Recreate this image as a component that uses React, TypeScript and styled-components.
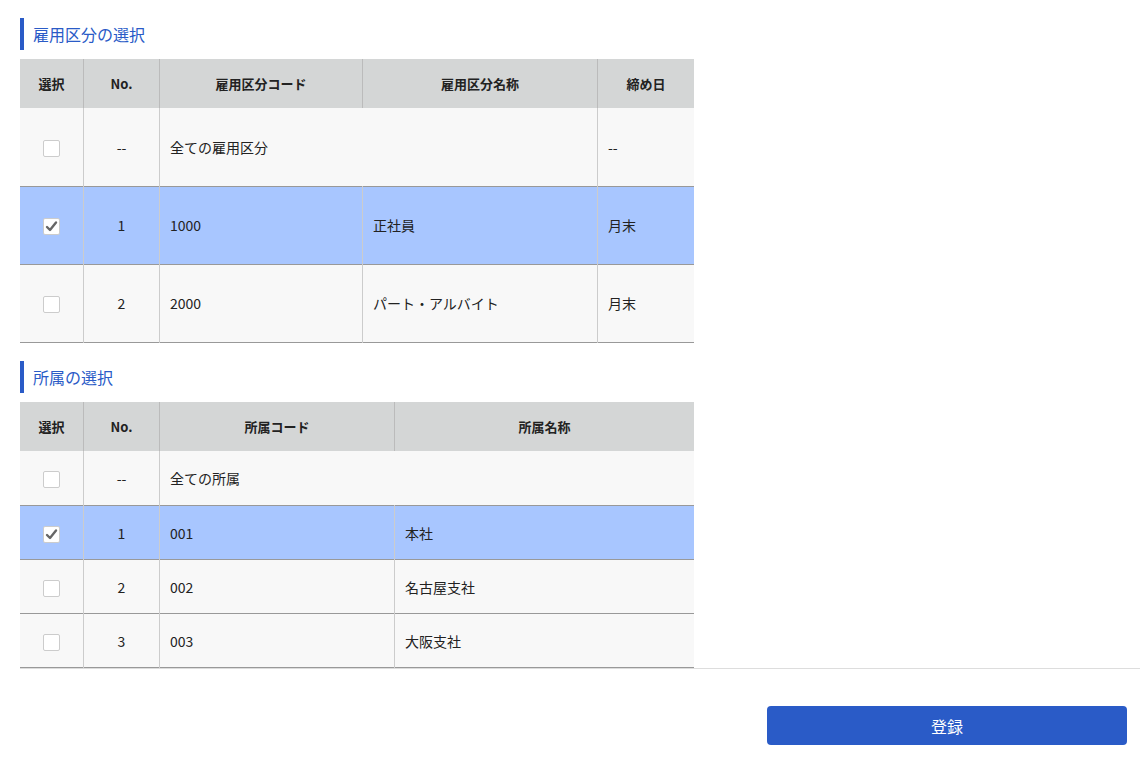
import React from "react";
import styled, { createGlobalStyle } from "styled-components";

const Global = createGlobalStyle`
  body { margin: 0; background: #fff; font-family: "Noto Sans CJK JP", "Noto Sans", sans-serif; color: #222; }
`;

const Page = styled.div`
  padding: 18px 0 0 0;
  width: 1140px;
`;
const Section = styled.div`
  padding-left: 20px;
`;
const Heading = styled.h2<{ $mt?: number }>`
  margin: ${(p) => p.$mt ?? 0}px 0 9px 0;
  border-left: 4px solid #2a5bc7;
  padding-left: 9px;
  height: 32px;
  line-height: 32px;
  font-size: 16px;
  font-weight: 400;
  color: #2a5bc7;
`;
const Table = styled.table`
  border-collapse: collapse;
  width: 674px;
  table-layout: fixed;
  font-size: 14px;
  border-bottom: 1px solid #999;
`;
const Th = styled.th<{ $w?: number }>`
  background: #d4d6d6;
  height: 49px;
  padding: 0;
  font-size: 13px;
  font-weight: 700;
  border-left: 1px solid #bbb;
  ${(p) => (p.$w ? `width: ${p.$w}px;` : "")}
  &:first-child { border-left: none; }
`;
const Tr = styled.tr<{ $sel?: boolean; $h: number }>`
  height: ${(p) => p.$h}px;
  background: ${(p) => (p.$sel ? "#a8c6ff" : "#f8f8f8")};
  & + & { border-top: 1px solid #999; }
`;
const Td = styled.td<{ $center?: boolean }>`
  padding: 0 10px;
  text-align: ${(p) => (p.$center ? "center" : "left")};
  border-left: 1px solid #ccc;
  &:first-child { border-left: none; }
`;
const Box = styled.span`
  display: inline-flex;
  width: 17px;
  height: 17px;
  box-sizing: border-box;
  border: 1px solid #ccc;
  border-radius: 2px;
  background: #fff;
  vertical-align: middle;
  align-items: center;
  justify-content: center;
`;
const Check = ({ on }: { on?: boolean }) => (
  <Box>
    {on && (
      <svg width="13" height="13" viewBox="0 0 13 13">
        <path d="M2 7 L5 10 L11 2.5" fill="none" stroke="#666" strokeWidth="2.4" strokeLinecap="round" strokeLinejoin="round" />
      </svg>
    )}
  </Box>
);
const Footer = styled.div`
  border-top: 1px solid #ddd;
  margin-top: 0;
  margin-left: 20px;
  display: flex;
  justify-content: flex-end;
  padding: 37px 13px 0 0;
`;
const Button = styled.button`
  width: 360px;
  height: 39px;
  background: #2a5bc7;
  color: #fff;
  border: none;
  border-radius: 4px;
  font-size: 16px;
  font-family: inherit;
`;

const t1 = [
  { no: "--", code: "全ての雇用区分", name: null, day: "--" },
  { no: "1", code: "1000", name: "正社員", day: "月末", sel: true },
  { no: "2", code: "2000", name: "パート・アルバイト", day: "月末" },
];
const t2 = [
  { no: "--", code: "全ての所属", name: null },
  { no: "1", code: "001", name: "本社", sel: true },
  { no: "2", code: "002", name: "名古屋支社" },
  { no: "3", code: "003", name: "大阪支社" },
];

export default function App() {
  return (
    <Page>
      <Global />
      <Section>
        <Heading>雇用区分の選択</Heading>
        <Table>
          <thead>
            <tr>
              <Th $w={63}>選択</Th>
              <Th $w={75}>No.</Th>
              <Th $w={202}>雇用区分コード</Th>
              <Th $w={234}>雇用区分名称</Th>
              <Th>締め日</Th>
            </tr>
          </thead>
          <tbody>
            {t1.map((r, i) => (
              <Tr key={i} $h={i === 0 ? 78 : 78} $sel={r.sel}>
                <Td $center><Check on={r.sel} /></Td>
                <Td $center>{r.no}</Td>
                {r.name === null ? <Td colSpan={2}>{r.code}</Td> : <><Td>{r.code}</Td><Td>{r.name}</Td></>}
                <Td>{r.day}</Td>
              </Tr>
            ))}
          </tbody>
        </Table>
        <Heading $mt={18}>所属の選択</Heading>
        <Table>
          <thead>
            <tr>
              <Th $w={63}>選択</Th>
              <Th $w={75}>No.</Th>
              <Th $w={234}>所属コード</Th>
              <Th>所属名称</Th>
            </tr>
          </thead>
          <tbody>
            {t2.map((r, i) => (
              <Tr key={i} $h={i === 0 ? 55 : 54} $sel={r.sel}>
                <Td $center><Check on={r.sel} /></Td>
                <Td $center>{r.no}</Td>
                {r.name === null ? <Td colSpan={2}>{r.code}</Td> : <><Td>{r.code}</Td><Td>{r.name}</Td></>}
              </Tr>
            ))}
          </tbody>
        </Table>
      </Section>
      <Footer>
        <Button>登録</Button>
      </Footer>
    </Page>
  );
}
